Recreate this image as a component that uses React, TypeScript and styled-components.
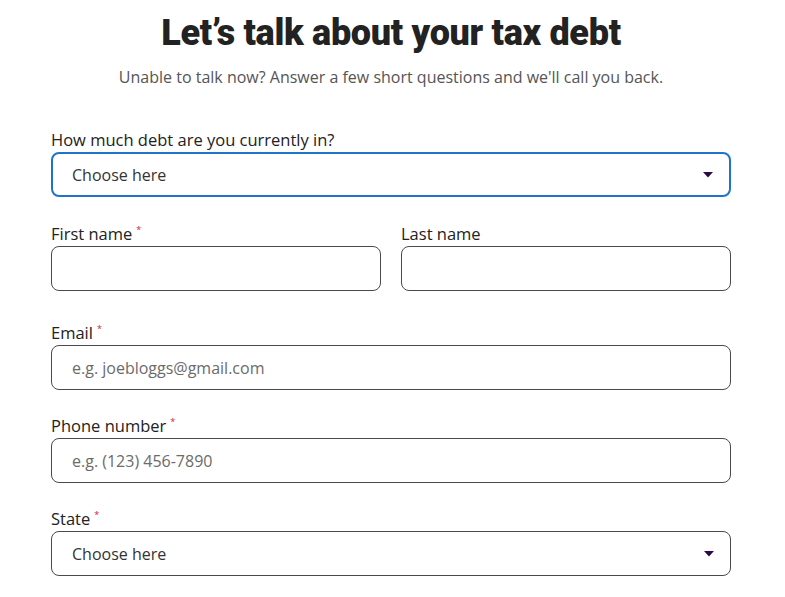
import React from 'react';
import styled, { createGlobalStyle } from 'styled-components';

const GlobalStyle = createGlobalStyle`
    body {
        margin: 0;
        background: #ffffff;
        font-family: 'Open Sans', 'Liberation Sans', sans-serif;
        color: #222222;
    }
`;

const Page = styled.div`
    width: 680px;
    margin: 0 0 0 51px;
    padding-top: 12px;
`;

const Title = styled.h1`
    margin: 0;
    text-align: center;
    font-family: Roboto, 'Liberation Sans', sans-serif;
    font-weight: 900;
    font-size: 36px;
    line-height: 42px;
    letter-spacing: -0.3px;
    color: #222222;
`;

const Subtitle = styled.p`
    margin: 12px 0 0 0;
    text-align: center;
    font-size: 16px;
    line-height: 22px;
    color: #555555;
`;

const Form = styled.form`
    display: flex;
    flex-direction: column;
    margin-top: 40px;
`;

const Row = styled.div<{ gap?: number }>`
    display: grid;
    grid-template-columns: 1fr 1fr;
    column-gap: 20px;
    margin-top: ${props => props.gap ?? 0}px;
`;

const Field = styled.div<{ gap?: number }>`
    display: flex;
    flex-direction: column;
    margin-top: ${props => props.gap ?? 0}px;
`;

const Label = styled.label`
    font-size: 16.5px;
    line-height: 22px;
    height: 22px;
    padding-top: 1px;
    margin-bottom: 1px;
    color: #222222;
`;

const Required = styled.span`
    color: #d9143a;
    font-size: 9px;
    line-height: 0;
    position: relative;
    top: -7px;
    margin-left: 4px;
`;

const Box = styled.div<{ focused?: boolean }>`
    position: relative;
    height: 45px;
    box-sizing: border-box;
    border: ${props => (props.focused ? '2px solid #1f74c9' : '1px solid #4a4a4a')};
    border-radius: 8px;
    background: #ffffff;
    display: flex;
    align-items: center;
    padding-left: ${props => (props.focused ? 19 : 20)}px;
    padding-right: 20px;
    font-size: 16px;
    color: #333333;
`;

const Placeholder = styled.span`
    color: #6b6b6b;
`;

const Caret = styled.svg`
    position: absolute;
    right: 16px;
    top: 50%;
    margin-top: -3px;
`;

const Select: React.FC<{ focused?: boolean }> = ({ focused }) => (
    <Box focused={focused}>
        Choose here
        <Caret width="10" height="6" viewBox="0 0 10 6">
            <path d="M0 0 L10 0 L5 5.5 Z" fill="#2b0a48" />
        </Caret>
    </Box>
);

export default function App() {
    return (
        <Page>
            <GlobalStyle />
            <Title>Let’s talk about your tax debt</Title>
            <Subtitle>Unable to talk now? Answer a few short questions and we'll call you back.</Subtitle>
            <Form>
                <Field>
                    <Label>How much debt are you currently in?</Label>
                    <Select focused />
                </Field>
                <Row gap={25}>
                    <Field>
                        <Label>First name<Required>*</Required></Label>
                        <Box />
                    </Field>
                    <Field>
                        <Label>Last name</Label>
                        <Box />
                    </Field>
                </Row>
                <Field gap={30}>
                    <Label>Email<Required>*</Required></Label>
                    <Box><Placeholder>e.g. joebloggs@gmail.com</Placeholder></Box>
                </Field>
                <Field gap={24}>
                    <Label>Phone number<Required>*</Required></Label>
                    <Box><Placeholder>e.g. (123) 456-7890</Placeholder></Box>
                </Field>
                <Field gap={24}>
                    <Label>State<Required>*</Required></Label>
                    <Select />
                </Field>
            </Form>
        </Page>
    );
}
